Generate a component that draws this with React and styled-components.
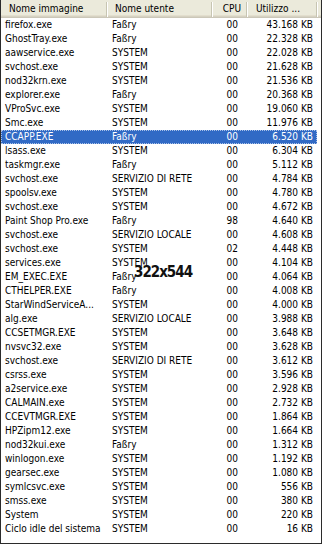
import React from 'react';
import styled, { createGlobalStyle } from 'styled-components';

const GlobalStyle = createGlobalStyle`
  html, body {
    margin: 0;
    padding: 0;
    background: #ffffff;
  }
`;

const processes = [
  ['firefox.exe', 'Faßry', '00', '43.168 KB'],
  ['GhostTray.exe', 'Faßry', '00', '22.328 KB'],
  ['aawservice.exe', 'SYSTEM', '00', '22.028 KB'],
  ['svchost.exe', 'SYSTEM', '00', '21.628 KB'],
  ['nod32krn.exe', 'SYSTEM', '00', '21.536 KB'],
  ['explorer.exe', 'Faßry', '00', '20.368 KB'],
  ['VProSvc.exe', 'SYSTEM', '00', '19.060 KB'],
  ['Smc.exe', 'SYSTEM', '00', '11.976 KB'],
  ['CCAPP.EXE', 'Faßry', '00', '6.520 KB'],
  ['lsass.exe', 'SYSTEM', '00', '6.304 KB'],
  ['taskmgr.exe', 'Faßry', '00', '5.112 KB'],
  ['svchost.exe', 'SERVIZIO DI RETE', '00', '4.784 KB'],
  ['spoolsv.exe', 'SYSTEM', '00', '4.780 KB'],
  ['svchost.exe', 'SYSTEM', '00', '4.672 KB'],
  ['Paint Shop Pro.exe', 'Faßry', '98', '4.640 KB'],
  ['svchost.exe', 'SERVIZIO LOCALE', '00', '4.608 KB'],
  ['svchost.exe', 'SYSTEM', '02', '4.448 KB'],
  ['services.exe', 'SYSTEM', '00', '4.104 KB'],
  ['EM_EXEC.EXE', 'Faßry', '00', '4.064 KB'],
  ['CTHELPER.EXE', 'Faßry', '00', '4.008 KB'],
  ['StarWindServiceA...', 'SYSTEM', '00', '4.000 KB'],
  ['alg.exe', 'SERVIZIO LOCALE', '00', '3.988 KB'],
  ['CCSETMGR.EXE', 'SYSTEM', '00', '3.648 KB'],
  ['nvsvc32.exe', 'SYSTEM', '00', '3.628 KB'],
  ['svchost.exe', 'SERVIZIO DI RETE', '00', '3.612 KB'],
  ['csrss.exe', 'SYSTEM', '00', '3.596 KB'],
  ['a2service.exe', 'SYSTEM', '00', '2.928 KB'],
  ['CALMAIN.exe', 'SYSTEM', '00', '2.732 KB'],
  ['CCEVTMGR.EXE', 'SYSTEM', '00', '1.864 KB'],
  ['HPZipm12.exe', 'SYSTEM', '00', '1.664 KB'],
  ['nod32kui.exe', 'Faßry', '00', '1.312 KB'],
  ['winlogon.exe', 'SYSTEM', '00', '1.192 KB'],
  ['gearsec.exe', 'SYSTEM', '00', '1.080 KB'],
  ['symlcsvc.exe', 'SYSTEM', '00', '556 KB'],
  ['smss.exe', 'SYSTEM', '00', '380 KB'],
  ['System', 'SYSTEM', '00', '220 KB'],
  ['Ciclo idle del sistema', 'SYSTEM', '00', '16 KB'],
];

const SELECTED = 8;
const COLS = '106px 105px 35px 70px 1fr';

const Frame = styled.div`
  position: relative;
  width: 322px;
  height: 544px;
  box-sizing: border-box;
  border: 1px solid #2b2b2b;
  border-top: none;
  background: #ffffff;
  overflow: hidden;
  font-family: 'DejaVu Sans Condensed', 'DejaVu Sans', sans-serif;
  font-stretch: condensed;
  font-size: 10px;
  color: #000000;
`;

const Header = styled.div`
  display: grid;
  grid-template-columns: ${COLS};
  height: 18px;
  background: #ebeadb;
  box-shadow: inset 0 -1px 0 #cbc7b8, inset 0 -2px 0 #d6d2c2, inset 0 -3px 0 #e2decd;
`;

const HeadCell = styled.div`
  display: flex;
  align-items: center;
  justify-content: ${(p) => (p.$right ? 'flex-end' : 'flex-start')};
  padding: 0 ${(p) => (p.$right ? '5px' : '0')} 2px ${(p) => (p.$right ? '0' : p.$pad || '8px')};
  white-space: nowrap;
  overflow: hidden;
  border-right: ${(p) => (p.$last ? 'none' : '1px solid #c7c5b2')};
  box-shadow: ${(p) => (p.$last ? 'none' : '1px 0 0 #ffffff')};
  height: 13px;
  margin-top: 2px;
  line-height: 13px;
`;

const Row = styled.div`
  display: grid;
  grid-template-columns: ${COLS};
  height: 14px;
  line-height: 14px;
`;

const RowFill = styled.div`
  grid-column: 1 / 5;
  display: grid;
  grid-template-columns: 106px 105px 35px 70px;
  background: ${(p) => (p.$selected ? '#316ac5' : 'transparent')};
  color: ${(p) => (p.$selected ? '#ffffff' : '#000000')};
  outline: ${(p) => (p.$selected ? '1px dotted #a9c1e8' : 'none')};
  outline-offset: -1px;
`;

const Cell = styled.div`
  white-space: nowrap;
  overflow: hidden;
  text-align: ${(p) => (p.$right ? 'right' : 'left')};
  padding: ${(p) => p.$pad};
`;

const Stamp = styled.div`
  position: absolute;
  left: 133px;
  top: 263px;
  font-family: 'DejaVu Sans Condensed', 'DejaVu Sans', sans-serif;
  font-weight: bold;
  font-size: 15px;
  color: #111111;
  letter-spacing: -1px;
`;

export default function App() {
  return (
    <>
      <GlobalStyle />
      <Frame>
        <Header>
          <HeadCell $pad="8px">Nome immagine</HeadCell>
          <HeadCell $pad="8px">Nome utente</HeadCell>
          <HeadCell $right>CPU</HeadCell>
          <HeadCell $pad="9px">Utilizzo ...</HeadCell>
          <HeadCell $last />
        </Header>
        {processes.map(([name, user, cpu, mem], i) => (
          <Row key={i}>
            <RowFill $selected={i === SELECTED}>
              <Cell $pad="0 0 0 4px">{name}</Cell>
              <Cell $pad="0 0 0 5px">{user}</Cell>
              <Cell $right $pad="0 9px 0 0">{cpu}</Cell>
              <Cell $right $pad="0 4px 0 0">{mem}</Cell>
            </RowFill>
          </Row>
        ))}
        <Stamp>322x544</Stamp>
      </Frame>
    </>
  );
}
